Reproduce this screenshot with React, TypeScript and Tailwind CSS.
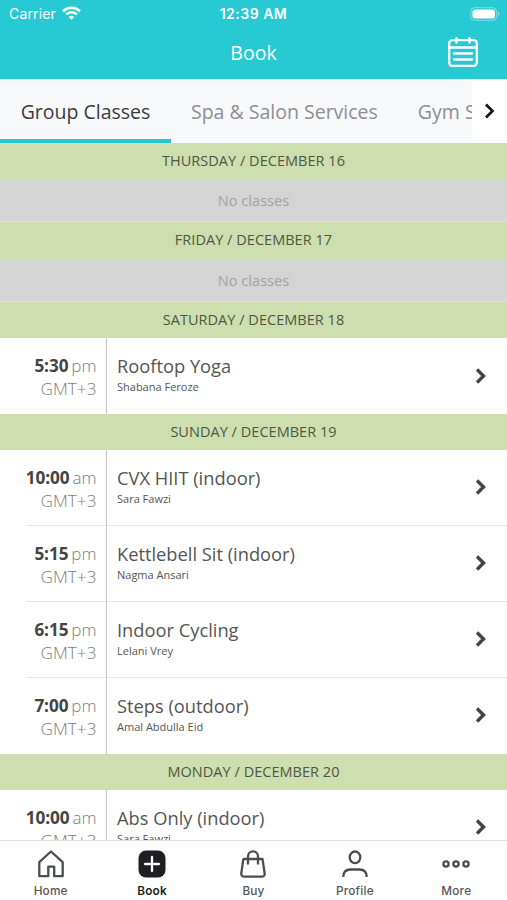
import React from 'react';

interface GymClass {
    time: string;
    period: string;
    name: string;
    trainer: string;
}

interface Day {
    label: string;
    classes: GymClass[];
}

const days: Day[] = [
    { label: 'THURSDAY / DECEMBER 16', classes: [] },
    { label: 'FRIDAY / DECEMBER 17', classes: [] },
    {
        label: 'SATURDAY / DECEMBER 18',
        classes: [{ time: '5:30', period: 'pm', name: 'Rooftop Yoga', trainer: 'Shabana Feroze' }],
    },
    {
        label: 'SUNDAY / DECEMBER 19',
        classes: [
            { time: '10:00', period: 'am', name: 'CVX HIIT (indoor)', trainer: 'Sara Fawzi' },
            { time: '5:15', period: 'pm', name: 'Kettlebell Sit (indoor)', trainer: 'Nagma Ansari' },
            { time: '6:15', period: 'pm', name: 'Indoor Cycling', trainer: 'Lelani Vrey' },
            { time: '7:00', period: 'pm', name: 'Steps (outdoor)', trainer: 'Amal Abdulla Eid' },
        ],
    },
    {
        label: 'MONDAY / DECEMBER 20',
        classes: [{ time: '10:00', period: 'am', name: 'Abs Only (indoor)', trainer: 'Sara Fawzi' }],
    },
];

const StatusBar = () => (
    <div className="grid h-[27px] grid-cols-3 items-center px-[9px] font-['Inter',sans-serif] text-[14px] text-white">
        <div className="flex items-center gap-[6px]">
            <span className="tracking-[0.15px]">Carrier</span>
            <svg className="mt-[-2px]" width="19" height="14" viewBox="0 0 19 14" fill="none" stroke="currentColor" strokeWidth="2.6">
                <path d="M1 5.2C5.8 .6 13.2 .6 18 5.2" />
                <path d="M4.1 8.4c3.1-2.9 7.7-2.9 10.8 0" />
                <path d="M9.5 13.8 6.6 10.9c1.6-1.5 4.2-1.5 5.8 0z" fill="currentColor" stroke="none" />
            </svg>
        </div>
        <span className="text-center font-semibold whitespace-nowrap tracking-[0.5px]">12:39 AM</span>
        <svg className="mr-[-2px] justify-self-end" width="30" height="14" viewBox="0 0 30 14">
            <rect x=".7" y=".7" width="26" height="12.6" rx="4" fill="none" stroke="#fff" strokeOpacity=".4" />
            <rect x="2.5" y="2.4" width="22.4" height="9.2" rx="2.4" fill="#fff" />
            <path d="M28.2 5v4c1.6-.6 1.6-3.4 0-4z" fill="#fff" fillOpacity=".5" />
        </svg>
    </div>
);

const Header = () => (
    <header className="h-[79px] shrink-0 bg-[#27cad3]">
        <StatusBar />
        <div className="grid h-[52px] grid-cols-3 items-center text-white">
            <span />
            <h1 className="text-center text-[19.5px] leading-[50px]">Book</h1>
            <svg className="mt-[-2px] mr-[29px] justify-self-end" width="30" height="30" viewBox="0 0 30 30" fill="none" stroke="currentColor" strokeWidth="2.3" strokeLinecap="round">
                <rect x="1.2" y="3.2" width="27.6" height="25.6" rx="3" />
                <path d="M1 10.5h28M8.5 1.2v4.5M21.5 1.2v4.5M6 16.5h18M6 22.5h18" />
            </svg>
        </div>
    </header>
);

const Tabs = () => (
    <nav className="flex h-16 shrink-0 bg-[#f8f9fb] text-[19.5px] whitespace-nowrap text-[#8e8e93]">
        <div className="flex min-w-0 flex-1 overflow-hidden">
            <div className="flex w-[171px] shrink-0 items-center justify-center border-b-4 border-[#27c5cf] pt-[6px] text-[#3b3b3f]">
                Group Classes
            </div>
            <div className="flex shrink-0 items-center px-5 pt-[2px]">Spa &amp; Salon Services</div>
            <div className="flex shrink-0 items-center px-5 pt-[2px]">Gym Services</div>
        </div>
        <div className="flex w-[35px] shrink-0 items-center bg-white pl-[12px]">
            <svg width="12" height="16" viewBox="0 0 12 16" fill="none" stroke="#151515" strokeWidth="2.7">
                <path d="m2 1.5 6.5 6.5L2 14.5" />
            </svg>
        </div>
    </nav>
);

const ClassRow = ({ item, last }: { item: GymClass; last: boolean }) => (
    <div className="flex h-[75.8px] pl-[26px]">
        <div className={`flex w-[81px] shrink-0 flex-col items-end border-r border-r-[#c4c4c4] pt-[16px] pr-[9.5px] leading-[23px] text-[#7c7c7c] ${last ? '' : 'border-b border-b-[#e6e6e6]'}`}>
            <div className="flex gap-[3px] whitespace-nowrap">
                <span className="text-[17.2px] font-bold tracking-[-0.1px] text-[#444]">{item.time}</span>
                <span className="text-[17px] font-light">{item.period}</span>
            </div>
            <span className="text-[17.2px] font-light">GMT+3</span>
        </div>
        <div className={`flex flex-1 items-center justify-between pr-[20px] pl-[10px] ${last ? '' : 'border-b border-[#e6e6e6]'}`}>
            <div className="self-start pt-[15px] text-[#555]">
                <p className="text-[18.3px] leading-[25px]">{item.name}</p>
                <p className="text-[11px] leading-[18px]">{item.trainer}</p>
            </div>
            <svg className="mt-[-1px]" width="12" height="16" viewBox="0 0 12 16" fill="none" stroke="#444" strokeWidth="3.4">
                <path d="m2 1.5 6.5 6.5L2 14.5" />
            </svg>
        </div>
    </div>
);

const DaySection = ({ day }: { day: Day }) => (
    <section>
        <h2 className="h-[36.3px] bg-[#cedeae] text-center text-[14.5px] leading-[36px] tracking-[0.03px] text-[#4d5846]">{day.label}</h2>
        {day.classes.length === 0 && (
            <div className="h-[43.2px] border-b border-[#dde2d8] bg-[#d4d4d4] text-center text-[14.6px] leading-[43px] text-[#a2a2a2]">
                No classes
            </div>
        )}
        {day.classes.map((item, idx) => (
            <ClassRow key={idx} item={item} last={idx === day.classes.length - 1} />
        ))}
    </section>
);

const navItems = [
    {
        label: 'Home',
        icon: <path d="M2.3 26.2V12.2L14 1.5l11.7 10.7v14h-8.5v-9.5h-5.9v9.5z" />,
    },
    {
        label: 'Book',
        icon: (
            <>
                <rect x=".5" y=".5" width="27" height="27" rx="7.5" fill="#1e1f22" stroke="none" />
                <path d="M14 7v14M7 14h14" stroke="#fff" strokeLinecap="round" />
            </>
        ),
    },
    {
        label: 'Buy',
        icon: (
            <>
                <path d="M5 9h18.5l2.2 14.5a2.8 2.8 0 0 1-2.8 3.2H5.1a2.8 2.8 0 0 1-2.8-3.2L4.2 9.8Q4.3 9 5 9z" />
                <path d="M9 14.5V6.8C9 3.7 11.2 1.3 14 1.3s5 2.4 5 5.5v7.7" />
            </>
        ),
    },
    {
        label: 'Profile',
        icon: (
            <>
                <ellipse cx="14" cy="7.3" rx="5.3" ry="5.8" />
                <path d="M2.3 27c0-4.8 2.8-7.5 7.2-7.5h9c4.4 0 7.2 2.7 7.2 7.5" />
            </>
        ),
    },
    {
        label: 'More',
        icon: (
            <>
                <circle cx="4" cy="14" r="2.6" />
                <circle cx="14" cy="14" r="2.6" />
                <circle cx="24" cy="14" r="2.6" />
            </>
        ),
    },
];

const BottomNav = () => (
    <nav className="grid h-[60px] shrink-0 grid-cols-5 border-t border-[#dedede] bg-white font-['Inter',sans-serif]">
        {navItems.map((item) => (
            <div key={item.label} className="flex flex-col items-center pt-[9px]">
                <svg width="28" height="28" viewBox="0 0 28 28" fill="none" stroke="#4c4d51" strokeWidth="2.3" strokeLinejoin="round">
                    {item.icon}
                </svg>
                <span className={`mt-[5px] text-[11.8px] leading-[16px] tracking-[0.2px] ${item.label === 'Book' ? 'font-semibold text-[#1e1f22]' : 'font-medium text-[#55565a]'}`}>
                    {item.label}
                </span>
            </div>
        ))}
    </nav>
);

const App: React.FC = () => {
    return (
        <div className="flex h-[900px] w-[507px] flex-col overflow-hidden bg-white font-['Open_Sans','Noto_Sans',sans-serif]">
            <Header />
            <Tabs />
            <main className="min-h-0 flex-1 overflow-hidden">
                {days.map((day) => (
                    <DaySection key={day.label} day={day} />
                ))}
            </main>
            <BottomNav />
        </div>
    );
};

export default App;
